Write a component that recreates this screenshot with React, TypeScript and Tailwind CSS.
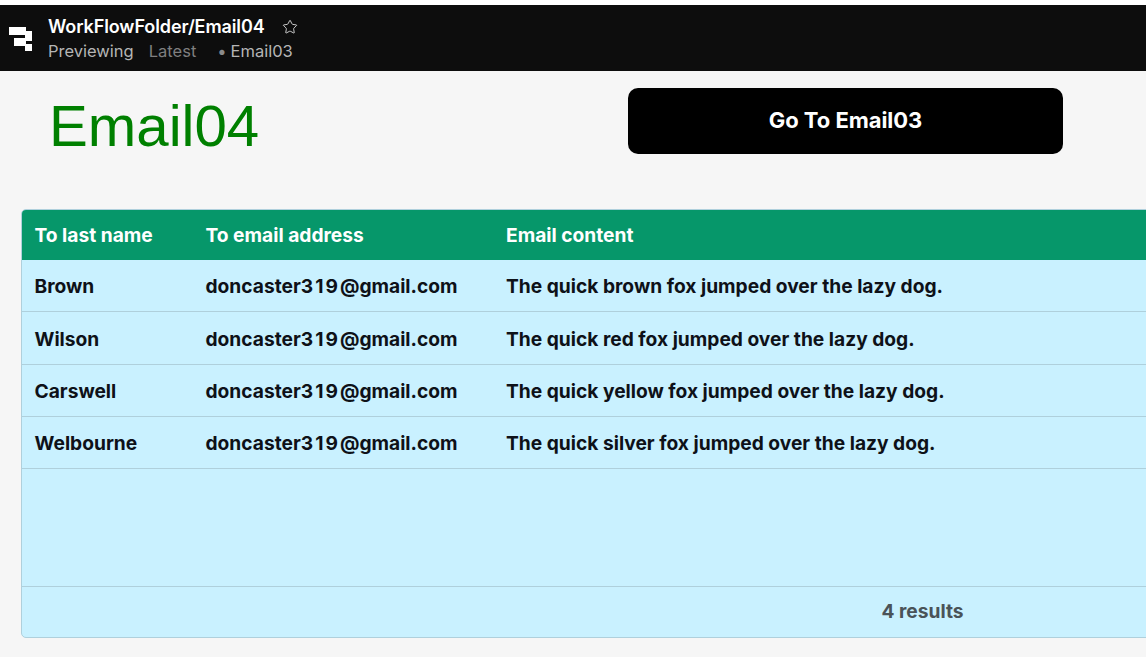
import React from "react";
import { Star } from "lucide-react";

const rows = [
  ["Brown", "The quick brown fox jumped over the lazy dog."],
  ["Wilson", "The quick red fox jumped over the lazy dog."],
  ["Carswell", "The quick yellow fox jumped over the lazy dog."],
  ["Welbourne", "The quick silver fox jumped over the lazy dog."],
];

export default function App() {
  return (
    <div className="h-[657px] w-[1146px] overflow-hidden bg-[#f6f6f6] font-['Inter',sans-serif]">
      <div className="h-[5px] bg-white" />
      <header className="flex h-[66px] items-center bg-[#0d0d0d] pl-[9px]">
        <svg width="25" height="25" viewBox="0 0 25 25" className="mt-[3px]" fill="white">
          <path d="M0 0h17v4h6v10h-6v3h6v7h-7v-5H5v-8h11V8H0z" />
        </svg>
        <div className="ml-[14px] flex flex-col pt-[2px]">
          <div className="flex items-center text-[18px] font-semibold leading-[22px] tracking-[-0.1px] text-white">
            WorkFlowFolder/Email04
            <Star className="ml-[17px] text-[#e5e5e5]" size={16} strokeWidth={1.3} />
          </div>
          <div className="mt-[2px] flex items-center text-[16.5px] leading-[22px]">
            <span className="text-[#b5b5b5]">Previewing</span>
            <span className="ml-[15px] text-[#7f7f7f]">Latest</span>
            <span className="ml-[21px] text-[#b5b5b5]">
              <span className="mr-[4px] text-[#8a8a8a]">•</span>Email03
            </span>
          </div>
        </div>
      </header>
      <div className="flex h-[138px] items-start">
        <h1 className="ml-[49px] mt-[20px] w-[579px] font-['Liberation_Sans',sans-serif] text-[58.2px] leading-[69px] text-[#008000]">
          Email04
        </h1>
        <button className="mt-[17px] h-[66px] w-[435px] rounded-[10px] bg-black pb-[2px] text-[22px] font-bold tracking-[-0.05px] text-white">
          Go To Email03
        </button>
      </div>
      <div className="ml-[21px] flex h-[429px] w-[1140px] flex-col overflow-hidden rounded-[5px] border border-[#afd0dc] bg-[#c9f1ff]">
        <div className="flex h-[50px] shrink-0 items-center bg-[#06976a] text-[19.2px] font-bold text-white">
          <div className="w-[171px] pl-[12.5px]">To last name</div>
          <div className="w-[300px] pl-[12.5px]">To email address</div>
          <div className="pl-[13px]">Email content</div>
        </div>
        {rows.map(([name, text], i) => (
          <div
            key={name}
            className={`flex shrink-0 items-center border-b border-[#afd0dc] pt-[2px] text-[19.2px] font-bold text-[#0e1118] ${i === 1 ? "h-[53px]" : "h-[52px]"}`}
          >
            <div className="w-[171px] pl-[12.5px]">{name}</div>
            <div className="w-[300px] pl-[12.5px]">
              doncaster<span className="tracking-[2px]">319</span>@gmail.com
            </div>
            <div className="pl-[13px]">{text}</div>
          </div>
        ))}
        <div className="h-[118px] shrink-0 border-b border-[#afd0dc]" />
        <div className="flex flex-1 items-center pb-[2px] pl-[859.5px] text-[19.2px] font-bold text-[#4a5358]">
          4 results
        </div>
      </div>
    </div>
  );
}
